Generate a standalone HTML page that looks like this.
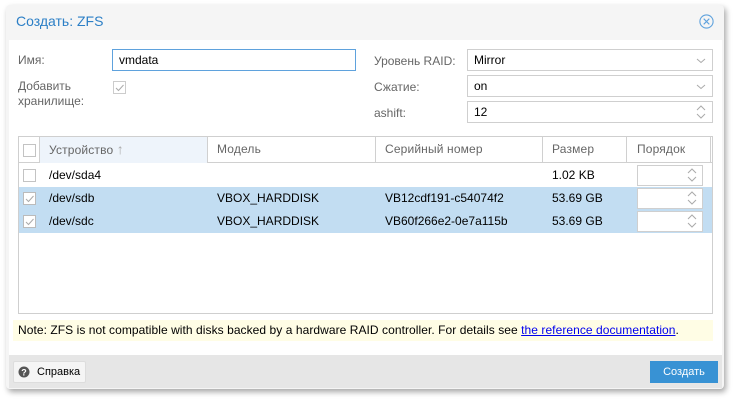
<!DOCTYPE html>
<html><head><meta charset="utf-8"><style>
*{box-sizing:border-box;margin:0;padding:0}
body{width:736px;height:403px;background:#fff;font-family:"Liberation Sans","Noto Sans CJK SC",sans-serif;font-size:12px;color:#000;position:relative;overflow:hidden}
.a{position:absolute}
.win{left:6px;top:5px;width:718px;height:384px;background:#f5f5f5;border-radius:4px;box-shadow:2px 3px 6px rgba(0,0,0,.35)}
.lbl{color:#666;font-size:12px}
.inp{background:#fff;border:1px solid #cfcfcf;height:22px;padding:3px 6px;font-size:12px}
.cb{width:13px;height:13px;border:1px solid #c3c3c3;background:#fff}
.hd{color:#666;top:136px;height:27px;line-height:27px;border-right:1px solid #d0d0d0}
.cell{height:23px;line-height:23px}
.sp{border:1px solid #cfcfcf;background:#fff;width:66px;height:21px}
</style></head><body>
<div class="a win"></div>
<div class="a" style="left:16px;top:13px;color:#2c7fc6;font-size:14px">Создать: ZFS</div>
<svg class="a" style="left:699px;top:14px" width="15" height="15" viewBox="0 0 15 15"><circle cx="7.5" cy="7.5" r="6.6" fill="none" stroke="#5fa2dd" stroke-width="1.1"/><path d="M4.7 4.7L10.3 10.3M10.3 4.7L4.7 10.3" stroke="#5fa2dd" stroke-width="1.1"/></svg>
<div class="a" style="left:9px;top:40px;width:713px;height:315px;background:#fff"></div>
<div class="a" style="left:9px;top:355px;width:713px;height:33px;background:#e6e6e6"></div>

<div class="a lbl" style="left:18px;top:53px">Имя:</div>
<div class="a inp" style="left:112px;top:49px;width:244px;border-color:#5fa2dd">vmdata</div>
<div class="a lbl" style="left:18px;top:79px;line-height:15px">Добавить<br>хранилище:</div>
<div class="a cb" style="left:113px;top:81px;border-color:#ccc"></div>
<svg class="a" style="left:113px;top:81px" width="13" height="13"><path d="M3 7l2.5 2.5L10.5 4" fill="none" stroke="#aaa" stroke-width="1"/></svg>

<div class="a lbl" style="left:374px;top:54px">Уровень RAID:</div>
<div class="a inp" style="left:467px;top:49px;width:246px">Mirror</div>
<div class="a lbl" style="left:374px;top:80px">Сжатие:</div>
<div class="a inp" style="left:467px;top:75px;width:246px">on</div>
<div class="a lbl" style="left:374px;top:106px">ashift:</div>
<div class="a inp" style="left:467px;top:101px;width:246px">12</div>
<svg class="a" style="left:695px;top:57px" width="12" height="8"><path d="M2 2l4 3.5 4-3.5" fill="none" stroke="#aaa"/></svg>
<svg class="a" style="left:695px;top:83px" width="12" height="8"><path d="M2 2l4 3.5 4-3.5" fill="none" stroke="#aaa"/></svg>
<svg class="a" style="left:695px;top:104px" width="12" height="16"><path d="M2 6l4-4 4 4M2 10l4 4 4-4" fill="none" stroke="#aaa"/></svg>

<div class="a" style="left:18px;top:136px;width:695px;height:178px;border:1px solid #cfcfcf"></div>
<div class="a" style="left:19px;top:137px;width:693px;height:26px;border-bottom:1px solid #d0d0d0"></div>
<div class="a" style="left:40px;top:137px;width:168px;height:26px;background:#eef4fb"></div>
<div class="a hd" style="left:19px;width:21px"></div>
<div class="a cb" style="left:23px;top:144px"></div>
<div class="a hd" style="left:40px;width:168px;padding-left:9px;letter-spacing:.15px">Устройство <span style="color:#aaa;font-size:14px">↑</span></div>
<div class="a hd" style="left:208px;width:168px;padding-left:9px;letter-spacing:.15px">Модель</div>
<div class="a hd" style="left:376px;width:167px;padding-left:9px;letter-spacing:.15px">Серийный номер</div>
<div class="a hd" style="left:543px;width:84px;padding-left:9px;letter-spacing:.15px">Размер</div>
<div class="a hd" style="left:627px;width:84px;padding-left:10px;letter-spacing:.15px">Порядок</div>

<div class="a" style="left:19px;top:187px;width:693px;height:46px;background:#c2ddf2"></div>
<div class="a cb" style="left:23px;top:169px"></div>
<div class="a cb" style="left:23px;top:192px;border-color:#bbb"></div>
<div class="a cb" style="left:23px;top:215px;border-color:#bbb"></div>
<svg class="a" style="left:23px;top:192px" width="13" height="36"><path d="M3 7l2.5 2.5L10.5 4M3 30l2.5 2.5L10.5 27" fill="none" stroke="#aaa"/></svg>

<div class="a cell" style="left:49px;top:164px">/dev/sda4</div>
<div class="a cell" style="left:552px;top:164px">1.02 KB</div>
<div class="a cell" style="left:49px;top:187px">/dev/sdb</div>
<div class="a cell" style="left:217px;top:187px">VBOX_HARDDISK</div>
<div class="a cell" style="left:385px;top:187px">VB12cdf191-c54074f2</div>
<div class="a cell" style="left:552px;top:187px">53.69 GB</div>
<div class="a cell" style="left:49px;top:210px">/dev/sdc</div>
<div class="a cell" style="left:217px;top:210px">VBOX_HARDDISK</div>
<div class="a cell" style="left:385px;top:210px">VB60f266e2-0e7a115b</div>
<div class="a cell" style="left:552px;top:210px">53.69 GB</div>
<div class="a sp" style="left:637px;top:165px"></div>
<div class="a sp" style="left:637px;top:188px"></div>
<div class="a sp" style="left:637px;top:211px"></div>
<svg class="a" style="left:686px;top:167px" width="12" height="64"><path d="M2 6l4-4 4 4M2 10l4 4 4-4M2 29l4-4 4 4M2 33l4 4 4-4M2 52l4-4 4 4M2 56l4 4 4-4" fill="none" stroke="#aaa"/></svg>

<div class="a" style="left:13px;top:320px;width:700px;height:21px;background:#fffde5;line-height:21px;padding-left:5px;letter-spacing:.06px">Note: ZFS is not compatible with disks backed by a hardware RAID controller. For details see <span style="color:#00e;text-decoration:underline">the reference documentation</span>.</div>

<div class="a" style="left:13px;top:361px;width:73px;height:22px;background:#f5f5f5;border:1px solid #ddd;border-radius:2px;line-height:20px;padding-left:23px;font-size:11px">Справка</div>
<svg class="a" style="left:18px;top:366px" width="12" height="12"><circle cx="6" cy="6" r="5.5" fill="#555"/><text x="6" y="9.5" font-size="9" font-weight="bold" fill="#fff" text-anchor="middle" font-family="Liberation Sans">?</text></svg>
<div class="a" style="left:650px;top:361px;width:68px;height:22px;background:#3892d4;color:#fff;text-align:center;line-height:22px;font-size:11px">Создать</div>
</body></html>
